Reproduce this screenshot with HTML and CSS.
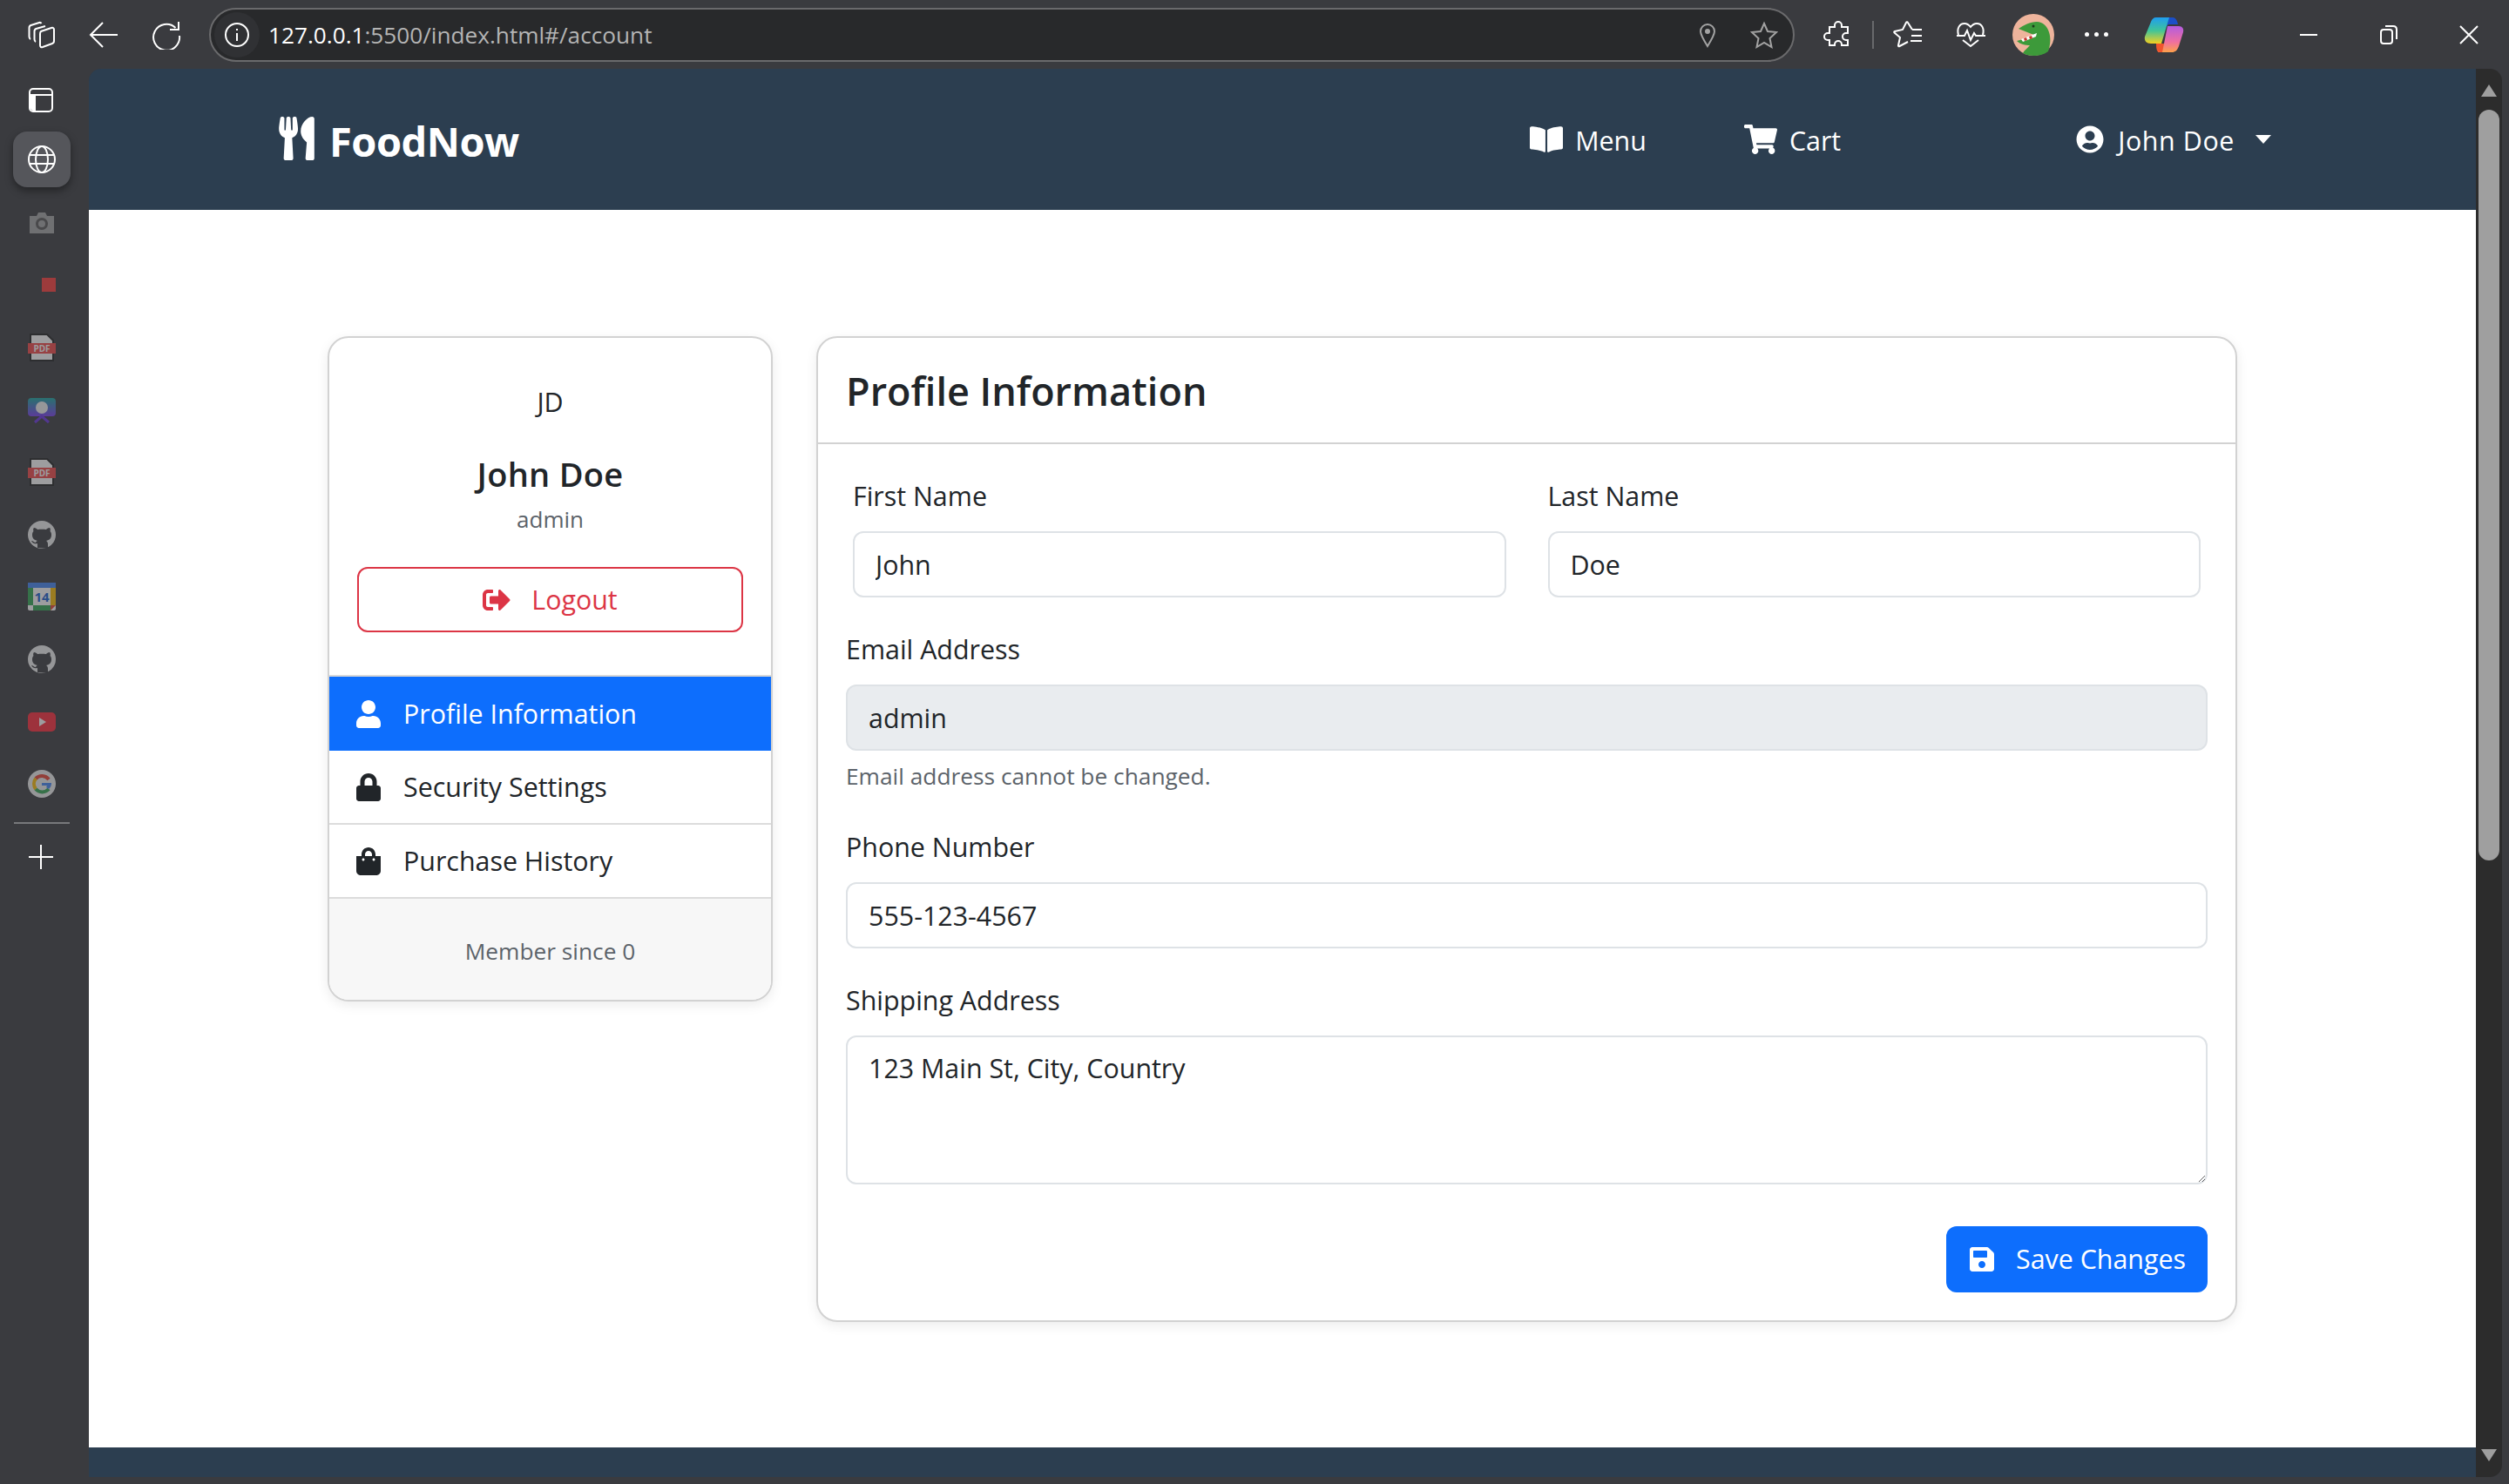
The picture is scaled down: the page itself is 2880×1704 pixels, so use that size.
FILE: index.html
```html
<!DOCTYPE html>
<html lang="en">
<head>
  <meta charset="UTF-8">
  <title>FoodNow - Account</title>
  <link rel="stylesheet" href="styles.css">
</head>
<body>
  <!-- browser top bar -->
  <div class="topbar">
    <div class="tb-btn">
      <svg class="line" width="34" height="34" viewBox="0 0 34 34"><path d="M17 13l12-4c2-.6 3 .4 3 2v13c0 1.500-.5 2.500-2 3l-11 4c-2 .6-3-.4-3-2V16c0-1.500.5-2.500 1-3z"/><path d="M11 25c-1-.5-1.500-1.500-1.500-3v-9c0-1.500.5-2.500 2-3L22 7"/><path d="M5 22c-1-.5-1.500-1.500-1.500-3V9c0-1.500.5-2.500 2-3L15 3c1-.3 2 0 2.500 1"/></svg>
    </div>
    <div class="tb-btn">
      <svg class="line" width="34" height="34" viewBox="0 0 34 34"><path d="M33 17H2M16 3 2 17l14 14"/></svg>
    </div>
    <div class="tb-btn">
      <svg class="line" width="34" height="34" viewBox="0 0 34 34"><path d="M27.500 9A15 15 0 1 0 32 18"/><path d="M21 11h10V2"/></svg>
    </div>
    <div class="address">
      <div class="info-wrap">
        <svg class="line" width="30" height="30" viewBox="0 0 30 30"><circle cx="15" cy="15" r="13"/><path d="M15 13v9M15 8v2"/></svg>
      </div>
      <div class="url"><span class="host">127.0.0.1</span>:5500/index.html#/account</div>
      <div class="addr-right">
        <svg class="line dim" width="22" height="30" viewBox="0 0 22 30"><path d="M11 28C6 20 3 15 3 11a8 8 0 0 1 16 0c0 4-3 9-8 17z"/><circle class="fill" cx="11" cy="11" r="3"/></svg>
        <svg class="line dim" width="32" height="32" viewBox="0 0 32 32"><path d="M16 3l4 9 10 1-7.500 7 2 10-8.500-5-8.500 5 2-10L2 13l10-1z"/></svg>
      </div>
    </div>
    <div class="tb-btn ext">
      <svg class="line" width="34" height="34" viewBox="0 0 34 34"><path d="M13 6a4 4 0 0 1 8 0v2h7v7h-2a4 4 0 0 0 0 8h2v6h-7v-1a4 4 0 0 0-8 0v1H7v-6H5a4 4 0 0 1 0-8h2V8h6z"/></svg>
    </div>
    <div class="tb-sep"></div>
    <div class="tb-btn">
      <svg class="line" width="34" height="32" viewBox="0 0 34 32"><path d="M22 10 17 2c-.5-1-1.500-1-2 0l-4 8-9 2c-1 .3-1 1-.5 1.500L8 19l-2 9c-.2 1 .5 1.500 1.500 1L17 24"/><path d="M22 10h11M21 17h12M20 23h13"/></svg>
    </div>
    <div class="tb-btn">
      <svg class="line" width="34" height="30" viewBox="0 0 34 30"><path d="M3 15C1 8 4 2 10 2c3 0 5 1.500 7 4 2-2.500 4-4 7-4 6 0 9 6 7 13"/><path d="M1 16h9l3-6 4 11 4-8 2 3h11M8 21l9 7 9-7"/></svg>
    </div>
    <div class="tb-btn">
      <svg width="48" height="48" viewBox="0 0 48 48">
        <circle cx="24" cy="24" r="24" fill="#eeb49c"/>
        <path d="M7 17c6-4 13-8 21-8 7 0 12 5 14 12 2 6 2 14-1 22-5 4-11 5-17 5-4 0-9-1-12-3 2-4 6-6 8-9-5 0-11-1-15-5l18-5c2-1 1-3-1-3z" fill="#3d9a3a"/>
        <path d="M10 29l18-7-1 4-15 6z" fill="#fff"/>
        <path d="M13 28l3-1 1 3-3 1zM19 26l3-1 1 3-3 1z" fill="#c9362e"/>
        <circle cx="24" cy="14" r="1.500" fill="#1d3a1c"/>
      </svg>
    </div>
    <div class="tb-btn dots"><span></span><span></span><span></span></div>
    <div class="tb-btn copilot">
      <svg width="46" height="46" viewBox="0 0 46 46">
        <defs>
          <linearGradient id="cpA" x1="0" y1="0" x2="0" y2="1"><stop offset="0" stop-color="#1f9df0"/><stop offset=".5" stop-color="#3fc49a"/><stop offset="1" stop-color="#f5d020"/></linearGradient>
          <linearGradient id="cpB" x1="0" y1="0" x2="0" y2="1"><stop offset="0" stop-color="#b35ce0"/><stop offset=".6" stop-color="#ef6fa0"/><stop offset="1" stop-color="#fda14a"/></linearGradient>
        </defs>
        <path d="M14 3h19l-7 10-6 20H8C3 33 0 30 1 25L8 8c1-3 3-5 6-5z" fill="url(#cpA)"/>
        <path d="M33 3c3 0 5 3 6 8h-11l-2 2 3-10z" fill="#1b4fc8"/>
        <path d="M27 13h13c4 0 6 3 5 7l-5 16c-2 5-4 7-8 7H16l7-10z" fill="url(#cpB)"/>
        <path d="M14 33h9l-2 10h-3c-3 0-4-3-4-10z" fill="#f0552d"/>
      </svg>
    </div>
    <div class="win-btns">
      <div class="win-btn"><svg class="line" width="22" height="22" viewBox="0 0 22 22"><path d="M1 11h20"/></svg></div>
      <div class="win-btn"><svg class="line" width="22" height="24" viewBox="0 0 22 24"><rect x="2" y="6" width="13" height="16" rx="3"/><path d="M7 2h9c3 0 4 1 4 4v11"/></svg></div>
      <div class="win-btn"><svg class="line" width="24" height="24" viewBox="0 0 24 24"><path d="M2 2l20 20M22 2 2 22"/></svg></div>
    </div>
  </div>

  <div class="window">
    <!-- browser side rail -->
    <div class="rail">
      <div class="rail-top">
        <svg class="line" width="30" height="30" viewBox="0 0 30 30"><rect x="2" y="2" width="26" height="26" rx="4"/><path d="M2 9h26"/><path class="panel" d="M3 9h6v18H6c-2 0-3-1-3-3z"/></svg>
      </div>
      <div class="rail-active">
        <svg class="line" width="34" height="34" viewBox="0 0 34 34"><circle cx="17" cy="17" r="15"/><ellipse cx="17" cy="17" rx="7" ry="15"/><path d="M3 12h28M3 22h28"/></svg>
      </div>
      <div class="rail-apps">
        <div class="app"><svg width="32" height="28" viewBox="0 0 32 28"><path d="M2 6h8l2-4h8l2 4h8v20H2z" fill="#a5a5a5"/><circle cx="16" cy="15" r="7" fill="#585858"/><circle cx="16" cy="15" r="4" fill="#a5a5a5"/></svg></div>
        <div class="app"><svg width="32" height="16" viewBox="0 0 32 16"><rect x="16" width="16" height="16" fill="#ff3b3b"/></svg></div>
        <div class="app"><svg width="32" height="32" viewBox="0 0 32 32"><path d="M3 1h19l7 7v23H3z" fill="#fff" stroke="#222" stroke-width="2"/><rect y="11" width="32" height="12" fill="#f44747"/><text x="16" y="21" class="pdf-text">PDF</text></svg></div>
        <div class="app"><svg width="32" height="32" viewBox="0 0 32 32"><defs><linearGradient id="chartG" x1="0" y1="0" x2="0" y2="1"><stop offset="0" stop-color="#1ba8a0"/><stop offset="1" stop-color="#7b3df0"/></linearGradient></defs><rect y="2" width="32" height="21" rx="4" fill="url(#chartG)"/><path d="M8 30l8-7 8 7" stroke="#6a35e0" stroke-width="3" fill="none"/><circle cx="16" cy="13" r="7" fill="#f2f2f2"/></svg></div>
        <div class="app"><svg width="32" height="32" viewBox="0 0 32 32"><path d="M3 1h19l7 7v23H3z" fill="#fff" stroke="#222" stroke-width="2"/><rect y="11" width="32" height="12" fill="#f44747"/><text x="16" y="21" class="pdf-text">PDF</text></svg></div>
        <div class="app"><svg width="32" height="32" viewBox="0 0 32 32"><circle cx="16" cy="16" r="16" fill="#f0f0f0"/><path d="M11 31v-5c-4 1-6-1-7-3 2 0 3 2 5 2 .5-1 1-2 2-2-4-1-6-3-6-7 0-2 .5-3 1.500-4-.5-1.500-.5-3 .5-4 2 0 3 1 4 2 2-.5 8-.5 10 0 1-1 2-2 4-2 1 1 1 2.500.5 4 1 1 1.500 2 1.500 4 0 4-2 6-6 7 1.500 1 2 2 2 4v5z" fill="#3a3b3f"/></svg></div>
        <div class="app"><svg width="32" height="32" viewBox="0 0 32 32"><rect width="32" height="32" rx="2" fill="#fff"/><path d="M0 6h6v20H0z" fill="#34a853"/><path d="M0 0h32v6H0z" fill="#4285f4"/><path d="M26 6h6v20h-6z" fill="#fbbc04"/><path d="M6 26h20v6H6z" fill="#34a853"/><path d="M26 26h6l-6 6z" fill="#ea4335"/><text x="16" y="22" class="cal-text">14</text></svg></div>
        <div class="app"><svg width="32" height="32" viewBox="0 0 32 32"><circle cx="16" cy="16" r="16" fill="#f0f0f0"/><path d="M11 31v-5c-4 1-6-1-7-3 2 0 3 2 5 2 .5-1 1-2 2-2-4-1-6-3-6-7 0-2 .5-3 1.500-4-.5-1.500-.5-3 .5-4 2 0 3 1 4 2 2-.5 8-.5 10 0 1-1 2-2 4-2 1 1 1 2.500.5 4 1 1 1.500 2 1.500 4 0 4-2 6-6 7 1.500 1 2 2 2 4v5z" fill="#3a3b3f"/></svg></div>
        <div class="app"><svg width="32" height="22" viewBox="0 0 32 22"><rect width="32" height="22" rx="5" fill="#ff2b3a"/><path d="M13 6l8 5-8 5z" fill="#fff"/></svg></div>
        <div class="app"><svg width="32" height="32" viewBox="0 0 32 32"><circle cx="16" cy="16" r="16" fill="#f0f0f0"/><path d="M24 11a10 10 0 0 0-15-1" stroke="#ea4335" stroke-width="4" fill="none"/><path d="M9 10a10 10 0 0 0 0 12" stroke="#fbbc04" stroke-width="4" fill="none"/><path d="M9 22a10 10 0 0 0 15 0" stroke="#34a853" stroke-width="4" fill="none"/><path d="M16 15h11c0 3-1 5-3 7l-3-2 1-2h-6z" fill="#4285f4"/></svg></div>
      </div>
      <div class="rail-sep"></div>
      <svg class="line plus" width="30" height="30" viewBox="0 0 30 30"><path d="M15 1v28M1 15h28"/></svg>
    </div>

    <div class="viewport">
      <nav class="navbar">
        <a class="brand">
          <svg class="brand-icon" viewBox="0 0 416 512"><path d="M207.900 15.200c.8 4.700 16.100 94.500 16.100 128.800 0 52.300-27.800 89.600-68.900 104.600L168 486.700c.7 13.700-10.200 25.300-24 25.300H80c-13.700 0-24.700-11.500-24-25.300l12.900-238.100C27.700 233.600 0 196.200 0 144 0 109.600 15.300 19.900 16.100 15.200 19.300-5.100 61.400-5.400 64 16.300v141.200c1.300 3.400 15.100 3.200 16 0 1.400-25.300 7.900-139.200 8-141.800 3.300-20.800 44.700-20.800 47.900 0 .2 2.700 6.600 116.500 8 141.800.9 3.200 14.800 3.400 16 0V16.300c2.600-21.600 44.800-21.400 48-1.100zm119.200 285.700l-15 185.100c-1.200 14 9.900 26 23.900 26h56c13.300 0 24-10.700 24-24V24c0-13.200-10.700-24-24-24-82.500 0-221.400 178.500-64.900 300.900z"/></svg>
          FoodNow
        </a>
        <div class="nav-links">
          <a class="nav-link">
            <svg class="nav-icon book" viewBox="0 0 576 512"><path d="M542.220 32.050c-54.800 3.110-163.720 14.430-230.960 55.590-4.640 2.840-7.270 7.890-7.270 13.170v363.870c0 11.550 12.630 18.850 23.280 13.490 69.180-34.820 169.230-44.320 218.700-46.920 16.890-.89 30.020-14.430 30.020-30.660V62.750c.01-17.710-15.350-31.740-33.770-30.700zM264.730 87.640C197.500 46.480 88.580 35.170 33.780 32.050 15.360 31.010 0 45.040 0 62.750V400.600c0 16.240 13.130 29.780 30.020 30.660 49.490 2.600 149.590 12.110 218.770 46.950 10.620 5.350 23.210-1.940 23.210-13.460V100.630c0-5.290-2.620-10.140-7.270-12.990z"/></svg>
            Menu
          </a>
          <a class="nav-link">
            <svg class="nav-icon cart" viewBox="0 0 576 512"><path d="M528.120 301.319l47.273-208C578.806 78.301 567.391 64 551.990 64H159.208l-9.166-44.810C147.758 8.021 137.930 0 126.529 0H24C10.745 0 0 10.745 0 24v16c0 13.255 10.745 24 24 24h69.883l70.248 343.435C147.325 417.100 136 435.222 136 456c0 30.928 25.072 56 56 56s56-25.072 56-56c0-15.674-6.447-29.835-16.824-40h209.647C430.447 426.165 424 440.326 424 456c0 30.928 25.072 56 56 56s56-25.072 56-56c0-22.172-12.888-41.332-31.579-50.405l5.517-24.276c3.413-15.018-8.002-29.319-23.403-29.319H218.117l-6.545-32h293.145c11.206 0 20.920-7.754 23.403-18.681z"/></svg>
            Cart
          </a>
          <a class="nav-link nav-user">
            <svg class="nav-icon user" viewBox="0 0 496 512"><path d="M248 8C111 8 0 119 0 256s111 248 248 248 248-111 248-248S385 8 248 8zm0 96c48.600 0 88 39.400 88 88s-39.400 88-88 88-88-39.400-88-88 39.400-88 88-88zm0 344c-58.700 0-111.300-26.600-146.500-68.200 18.800-35.400 55.600-59.800 98.500-59.800 2.400 0 4.800.4 7.100 1.100 13 4.200 26.600 6.900 40.900 6.900 14.300 0 28-2.700 40.900-6.900 2.300-.7 4.700-1.100 7.100-1.100 42.900 0 79.700 24.400 98.500 59.800C359.300 421.400 306.700 448 248 448z"/></svg>
            John Doe
            <span class="caret"></span>
          </a>
        </div>
      </nav>

      <main class="content">
        <div class="account">
          <!-- profile sidebar -->
          <aside class="card side-card">
            <div class="side-top">
              <div class="initials">JD</div>
              <h5 class="side-name">John Doe</h5>
              <p class="side-role">admin</p>
              <button class="btn-logout">
                <svg class="btn-icon" viewBox="0 0 512 512"><path d="M497 273L329 441c-15 15-41 4.500-41-17v-96H152c-13.300 0-24-10.700-24-24v-96c0-13.300 10.700-24 24-24h136V88c0-21.400 25.900-32 41-17l168 168c9.300 9.400 9.300 24.600 0 34zM192 436v-40c0-6.600-5.400-12-12-12H96c-17.700 0-32-14.300-32-32V160c0-17.700 14.300-32 32-32h84c6.600 0 12-5.400 12-12V76c0-6.600-5.400-12-12-12H96c-53 0-96 43-96 96v192c0 53 43 96 96 96h84c6.600 0 12-5.400 12-12z"/></svg>
                Logout
              </button>
            </div>
            <div class="side-menu">
              <a class="side-item active">
                <svg class="item-icon" viewBox="0 0 448 512"><path d="M224 256c70.700 0 128-57.300 128-128S294.700 0 224 0 96 57.300 96 128s57.300 128 128 128zm89.600 32h-16.700c-22.200 10.200-46.900 16-72.900 16s-50.600-5.800-72.900-16h-16.700C60.200 288 0 348.200 0 422.400V464c0 26.500 21.500 48 48 48h352c26.500 0 48-21.500 48-48v-41.600c0-74.200-60.200-134.400-134.400-134.400z"/></svg>
                Profile Information
              </a>
              <a class="side-item">
                <svg class="item-icon" viewBox="0 0 448 512"><path d="M400 224h-24v-72C376 68.200 307.800 0 224 0S72 68.200 72 152v72H48c-26.500 0-48 21.500-48 48v192c0 26.500 21.500 48 48 48h352c26.500 0 48-21.500 48-48V272c0-26.500-21.500-48-48-48zm-104 0H152v-72c0-39.700 32.300-72 72-72s72 32.300 72 72v72z"/></svg>
                Security Settings
              </a>
              <a class="side-item">
                <svg class="item-icon" viewBox="0 0 448 512"><path d="M352 160v-32C352 57.420 294.579 0 224 0 153.420 0 96 57.420 96 128v32H0v272c0 44.183 35.817 80 80 80h288c44.183 0 80-35.817 80-80V160h-96zm-192-32c0-35.290 28.710-64 64-64s64 28.710 64 64v32H160v-32zm160 120c-13.255 0-24-10.745-24-24s10.745-24 24-24 24 10.745 24 24-10.745 24-24 24zm-192 0c-13.255 0-24-10.745-24-24s10.745-24 24-24 24 10.745 24 24-10.745 24-24 24z"/></svg>
                Purchase History
              </a>
            </div>
            <div class="side-foot">Member since 0</div>
          </aside>

          <!-- profile form -->
          <section class="card form-card">
            <div class="form-head">
              <h3>Profile Information</h3>
            </div>
            <form class="form-body">
              <div class="name-row">
                <div class="field">
                  <label>First Name</label>
                  <input class="control" type="text" value="John">
                </div>
                <div class="field">
                  <label>Last Name</label>
                  <input class="control" type="text" value="Doe">
                </div>
              </div>
              <div class="field">
                <label>Email Address</label>
                <input class="control" type="text" value="admin" disabled>
                <div class="help">Email address cannot be changed.</div>
              </div>
              <div class="field">
                <label>Phone Number</label>
                <input class="control" type="text" value="555-123-4567">
              </div>
              <div class="field">
                <label>Shipping Address</label>
                <textarea class="control area">123 Main St, City, Country</textarea>
              </div>
              <div class="form-actions">
                <button class="btn-save" type="button">
                  <svg class="btn-icon" viewBox="0 0 448 512"><path d="M433.941 129.941l-83.882-83.882A48 48 0 0 0 316.118 32H48C21.490 32 0 53.490 0 80v352c0 26.510 21.490 48 48 48h352c26.510 0 48-21.490 48-48V163.882a48 48 0 0 0-14.059-33.941zM224 416c-35.346 0-64-28.654-64-64 0-35.346 28.654-64 64-64s64 28.654 64 64c0 35.346-28.654 64-64 64zm96-304.520V212c0 6.627-5.373 12-12 12H76c-6.627 0-12-5.373-12-12V108c0-6.627 5.373-12 12-12h228.520c3.183 0 6.235 1.264 8.485 3.515l3.480 3.480A11.996 11.996 0 0 1 320 111.480z"/></svg>
                  Save Changes
                </button>
              </div>
            </form>
          </section>
        </div>
      </main>

      <footer class="page-foot"></footer>
    </div>

    <!-- page scrollbar -->
    <div class="scrollbar">
      <span class="arrow up"></span>
      <div class="thumb"></div>
      <span class="arrow down"></span>
    </div>
  </div>
</body>
</html>
```

FILE: styles.css
```css
* {
  box-sizing: border-box;
}

html, body {
  height: 100%;
}

body {
  margin: 0;
  background: #3a3b3f;
  font-family: "Open Sans", "Noto Sans", sans-serif;
  font-size: 30.4px;
  line-height: 48px;
  color: #212529;
  overflow: hidden;
}

svg {
  display: block;
  flex: none;
}

.line {
  fill: none;
  stroke: #fff;
  stroke-width: 2;
}

.line.dim {
  stroke: #a3a3a3;
}

.line .fill {
  fill: #a3a3a3;
  stroke: none;
}

.line .panel {
  fill: #fff;
  stroke: none;
}

/* top bar */
.topbar {
  height: 79px;
  display: flex;
  align-items: center;
  padding-left: 11px;
}

.tb-btn {
  width: 72px;
  height: 72px;
  display: flex;
  align-items: center;
  justify-content: center;
  flex: none;
}

.address {
  width: 1820px;
  height: 62px;
  margin: 0 14px 0 13px;
  display: flex;
  align-items: center;
  background: #28292b;
  border: 2px solid #6a6a6c;
  border-radius: 31px;
  flex: none;
}

.info-wrap {
  width: 52px;
  height: 52px;
  margin-left: 4px;
  border-radius: 50%;
  background: #303134;
  display: flex;
  align-items: center;
  justify-content: center;
}

.url {
  margin-left: 10px;
  font-size: 26.2px;
  color: #b4b4b4;
}

.host {
  color: #fff;
}

.addr-right {
  margin-left: auto;
  margin-right: 15px;
  display: flex;
  align-items: center;
  gap: 38px;
  padding-right: 2px;
}

.ext {
  width: 72px;
}

.tb-sep {
  width: 2px;
  height: 32px;
  margin: 0 3px;
  background: #68696c;
  flex: none;
}

.dots {
  gap: 6px;
}

.dots span {
  width: 5px;
  height: 5px;
  border-radius: 50%;
  background: #fff;
}

.copilot {
  margin-left: 6px;
}

.win-btns {
  margin-left: auto;
  display: flex;
}

.win-btn {
  width: 92px;
  height: 72px;
  display: flex;
  align-items: center;
  justify-content: center;
}

/* window body */
.window {
  height: 1617px;
  display: flex;
}

.rail {
  width: 102px;
  flex: none;
  display: flex;
  flex-direction: column;
  align-items: center;
}

.rail-top {
  height: 72px;
  display: flex;
  align-items: center;
  margin-left: -8px;
}

.rail-active {
  width: 66px;
  height: 64px;
  margin-left: -6px;
  border-radius: 16px;
  background: #55565b;
  box-shadow: 0 4px 10px rgba(0, 0, 0, 0.4);
  display: flex;
  align-items: center;
  justify-content: center;
}

.rail-apps {
  margin: 5px 0 0 -6px;
  display: grid;
  grid-auto-rows: 71.6px;
  opacity: 0.5;
}

.app {
  display: flex;
  align-items: center;
  justify-content: center;
}

.pdf-text {
  font-size: 10px;
  font-weight: 700;
  fill: #fff;
  text-anchor: middle;
  font-family: "Open Sans", sans-serif;
}

.cal-text {
  font-size: 15px;
  font-weight: 700;
  fill: #1a5fd0;
  text-anchor: middle;
  font-family: "Open Sans", sans-serif;
}

.rail-sep {
  width: 64px;
  height: 2px;
  margin: 8px 0 0 -6px;
  background: #77787b;
}

.plus {
  margin: 23px 0 0 -8px;
}

.viewport {
  width: 2740px;
  flex: none;
  display: flex;
  flex-direction: column;
  border-top-left-radius: 14px;
  overflow: hidden;
}

/* site navbar */
.navbar {
  height: 162px;
  flex: none;
  display: flex;
  align-items: center;
  padding: 4px 235px 0 216px;
  background: #2c3e50;
  color: #fff;
}

.brand {
  display: flex;
  align-items: center;
  gap: 15px;
  font-size: 47px;
  font-weight: 700;
  letter-spacing: -0.5px;
}

.brand-icon {
  width: 45px;
  height: 50px;
  fill: #fff;
  margin-top: -6px;
}

.nav-links {
  margin-left: auto;
  display: flex;
  align-items: center;
  gap: 112px;
}

.nav-link {
  display: flex;
  align-items: center;
  gap: 14px;
}

.nav-icon {
  fill: #fff;
  margin-top: -4px;
}

.nav-icon.book {
  width: 38px;
  height: 34px;
}

.nav-icon.cart {
  width: 38px;
  height: 34px;
}

.nav-icon.user {
  width: 32px;
  height: 32px;
  margin-right: 2px;
}

.nav-user {
  margin-left: 158px;
  letter-spacing: 0.6px;
}

.caret {
  width: 0;
  height: 0;
  margin-left: 10px;
  border-left: 9px solid transparent;
  border-right: 9px solid transparent;
  border-top: 10px solid #fff;
  margin-top: -4px;
}

/* account page */
.content {
  flex: 1;
  background: #fff;
  padding-top: 145px;
}

.account {
  width: 2192px;
  margin: 0 auto;
  display: flex;
  align-items: flex-start;
  gap: 50px;
}

.card {
  background: #fff;
  border: 2px solid #d2d2d2;
  border-radius: 24px;
  box-shadow: 0 4px 14px rgba(0, 0, 0, 0.08);
  overflow: hidden;
}

.side-card {
  width: 511px;
  flex: none;
}

.side-top {
  padding: 50px 32px 49px;
  text-align: center;
  border-bottom: 2px solid #d9d9d9;
}

.initials {
  margin-bottom: 34px;
}

.side-name {
  margin: 0;
  font-size: 38px;
  font-weight: 600;
  line-height: 48px;
  letter-spacing: 0.3px;
}

.side-role {
  margin: 4px 0 31px;
  font-size: 26px;
  color: #5c636a;
}

.btn-logout {
  width: 100%;
  height: 75px;
  display: flex;
  align-items: center;
  justify-content: center;
  gap: 24px;
  background: #fff;
  border: 2px solid #dc3545;
  border-radius: 12px;
  font: inherit;
  color: #dc3545;
}

.btn-icon {
  width: 32px;
  height: 32px;
  fill: currentColor;
}

.side-item {
  height: 85px;
  display: flex;
  align-items: center;
  gap: 26px;
  padding: 0 31px;
  border-bottom: 2px solid #dcdcdc;
}

.side-item.active {
  background: #0d6efd;
  color: #fff;
  border-bottom: none;
}

.item-icon {
  width: 28px;
  height: 32px;
  fill: currentColor;
}

.side-foot {
  height: 116px;
  display: flex;
  align-items: center;
  justify-content: center;
  padding-top: 3px;
  background: #f7f7f7;
  font-size: 26.3px;
  color: #5c636a;
}

.form-card {
  flex: 1;
}

.form-head {
  height: 122px;
  display: flex;
  align-items: center;
  padding: 2px 32px 0;
  border-bottom: 2px solid #d2d2d2;
}

.form-head h3 {
  margin: 0;
  font-size: 45px;
  font-weight: 600;
  line-height: 56px;
}

.form-body {
  padding: 36px 32px 32px;
  display: flex;
  flex-direction: column;
  gap: 36px;
}

.name-row {
  display: grid;
  grid-template-columns: 1fr 1fr;
  gap: 48px;
  padding: 0 8px;
}

.field label {
  display: block;
  margin-bottom: 16px;
}

.control {
  display: block;
  width: 100%;
  height: 76px;
  padding: 0 24px;
  background: #fff;
  border: 2px solid #dee2e6;
  border-radius: 12px;
  font: inherit;
  color: #212529;
}

.control:disabled {
  background: #e9ecef;
}

.area {
  height: 171px;
  padding-top: 12px;
}

.help {
  margin-top: 8px;
  font-size: 26.3px;
  line-height: 43px;
  color: #5c636a;
}

.form-actions {
  display: flex;
  justify-content: flex-end;
  margin-top: 12px;
}

.btn-save {
  width: 300px;
  height: 76px;
  display: flex;
  align-items: center;
  justify-content: center;
  gap: 23px;
  background: #0d6efd;
  border: none;
  border-radius: 12px;
  font: inherit;
  color: #fff;
}

.page-foot {
  height: 34px;
  flex: none;
  background: #2c3e50;
}

/* scrollbar */
.scrollbar {
  width: 30px;
  height: 1617px;
  flex: none;
  background: #2c2c2c;
  border-radius: 0 14px 14px 0;
  display: flex;
  flex-direction: column;
  align-items: center;
}

.arrow {
  width: 0;
  height: 0;
  border-left: 9px solid transparent;
  border-right: 9px solid transparent;
}

.arrow.up {
  margin-top: 18px;
  border-bottom: 14px solid #9f9f9f;
}

.arrow.down {
  margin-top: auto;
  margin-bottom: 18px;
  border-top: 14px solid #9f9f9f;
}

.thumb {
  width: 24px;
  height: 862px;
  margin-top: 15px;
  border-radius: 12px;
  background: #9f9f9f;
}
```
